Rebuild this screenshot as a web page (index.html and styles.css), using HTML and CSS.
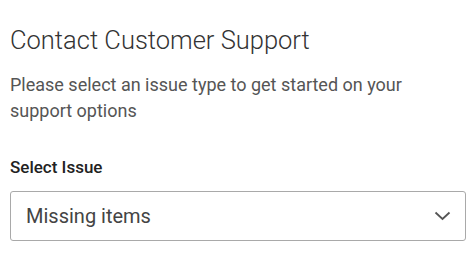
FILE: index.html
```html
<!DOCTYPE html>
<html lang="en">
<head>
    <meta charset="UTF-8">
    <meta name="viewport" content="width=device-width, initial-scale=1.0">
    <title>Contact Customer Support</title>
    <link rel="stylesheet" href="styles.css">
</head>
<body>
    <div class="support">
        <h1 class="title">Contact Customer Support</h1>
        <p class="intro">Please select an issue type to get started on your support options</p>

        <label class="field-label" for="issue">Select Issue</label>
        <div class="select">
            <span class="select-value" id="issue">Missing items</span>
            <svg class="chevron" width="17" height="10" viewBox="0 0 17 10">
                <path d="M1.5 1.5 L8.5 8 L15.5 1.5" fill="none" stroke="#555" stroke-width="1.8"/>
            </svg>
        </div>
    </div>
</body>
</html>
```

FILE: styles.css
```css
body {
    font-family: Roboto, 'Liberation Sans', sans-serif;
    margin: 0;
    background-color: #fff;
}

.support {
    padding: 25px 8px 0 10px;
}

.title {
    font-size: 25.5px;
    font-weight: 300;
    color: #333;
    margin: 0;
    line-height: 30px;
}

.intro {
    font-size: 18px;
    color: #555;
    line-height: 26px;
    margin: 17px 0 0;
    max-width: 440px;
}

.field-label {
    display: block;
    font-size: 17px;
    font-weight: 500;
    color: #222;
    margin-top: 33px;
    line-height: 20px;
}

.select {
    display: flex;
    align-items: center;
    justify-content: space-between;
    box-sizing: border-box;
    margin-top: 14px;
    height: 50px;
    border: 1px solid #a9a9a9;
    border-radius: 3px;
    padding: 0 14px 0 15px;
}

.select-value {
    font-size: 20px;
    color: #444;
}

.chevron {
    display: block;
}
```
